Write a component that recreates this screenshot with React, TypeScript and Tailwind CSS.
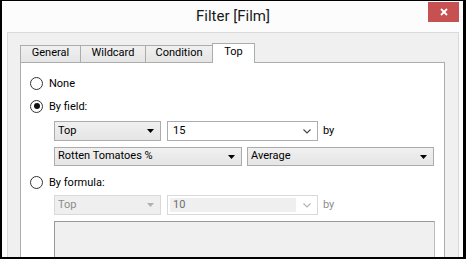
import React from "react";

const Tri = ({ color = "#000" }: { color?: string }) => (
  <svg width="7" height="4" viewBox="0 0 7 4" className="shrink-0">
    <path d="M0 0H7L3.5 4Z" fill={color} />
  </svg>
);

const Chev = ({ color = "#555" }: { color?: string }) => (
  <svg width="8" height="5" viewBox="0 0 8 5" className="shrink-0">
    <path d="M0.5 0.5L4 4L7.5 0.5" stroke={color} fill="none" strokeWidth="1.1" />
  </svg>
);

const Radio = ({ checked, label }: { checked?: boolean; label: string }) => (
  <div className="flex h-[14px] items-center">
    <div className="flex h-[13px] w-[13px] items-center justify-center rounded-full border border-[#333] bg-white">
      {checked && <div className="h-[6px] w-[6px] rounded-full bg-[#111]" />}
    </div>
    <span className="ml-[6px] leading-none">{label}</span>
  </div>
);

const Drop = ({ w, text, disabled }: { w: string; text: string; disabled?: boolean }) => (
  <div
    className={`flex h-full items-center justify-between pl-[3px] pr-[6px] ${w} ${
      disabled
        ? "border border-[#d9d9d9] bg-[#efefef] text-[#8c8c8c]"
        : "border border-[#acacac] bg-gradient-to-b from-[#f0f0f0] to-[#e5e5e5] text-black"
    }`}
  >
    <span>{text}</span>
    <Tri color={disabled ? "#b0b0b0" : "#000"} />
  </div>
);

export default function App() {
  return (
    <div
      className="relative flex h-[259px] w-[466px] flex-col overflow-hidden border-b-2 border-l-2 border-r-[3px] border-t border-black bg-[#fcfcfc] text-[11px] text-black"
      style={{ fontFamily: "Roboto, 'Noto Sans', sans-serif" }}
    >
      <div className="flex h-[31px] shrink-0 items-center justify-center pb-[1px] pl-[1px] text-[15px] text-[#1a1a1a]">
        Filter [Film]
      </div>
      <div className="absolute right-[4px] top-[1px] flex h-[20px] w-[31px] items-center justify-center bg-[#c75050]">
        <svg width="8" height="8" viewBox="0 0 8 8">
          <path d="M1 1L7 7M7 1L1 7" stroke="#fff" strokeWidth="1.8" />
        </svg>
      </div>

      <div className="ml-[5px] flex w-[452px] flex-1 flex-col border border-b-0 border-[#dadada] bg-[#f0f0f0] pl-[12px] pr-[13px] pt-[10px]">
        <div className="flex h-[19px] items-end">
          <div className="flex h-[17px] w-[60px] items-center justify-center border-l border-t border-[#acacac] bg-gradient-to-b from-[#f0f0f0] to-[#e5e5e5] pb-[1px]">
            General
          </div>
          <div className="flex h-[17px] w-[65px] items-center justify-center border-l border-t border-[#acacac] bg-gradient-to-b from-[#f0f0f0] to-[#e5e5e5] pb-[1px]">
            Wildcard
          </div>
          <div className="flex h-[17px] w-[67px] items-center justify-center border-l border-t border-[#acacac] bg-gradient-to-b from-[#f0f0f0] to-[#e5e5e5] pb-[1px]">
            Condition
          </div>
          <div className="relative z-10 -mb-px flex h-[20px] w-[43px] items-center justify-center border-l border-r border-t border-[#acacac] bg-white pb-[3px]">
            Top
          </div>
        </div>

        <div className="flex flex-1 flex-col border border-b-0 border-[#acacac] bg-white pl-[9px] pt-[13px]">
          <Radio label="None" />
          <div className="mt-[9px]">
            <Radio checked label="By field:" />
          </div>

          <div className="ml-[24px] mt-[8px] flex h-[20px] items-center">
            <Drop w="w-[107px]" text="Top" />
            <div className="ml-[6px] flex h-full w-[151px] items-center justify-between border border-[#abadb3] bg-white pl-[5px] pr-[6px]">
              <span>15</span>
              <Chev color="#444" />
            </div>
            <span className="ml-[5px]">by</span>
          </div>

          <div className="ml-[24px] mt-[6px] flex h-[19px] items-center">
            <Drop w="w-[188px]" text="Rotten Tomatoes %" />
            <div className="ml-[5px] h-full">
              <Drop w="w-[187px]" text="Average" />
            </div>
          </div>

          <div className="mt-[9px]">
            <Radio label="By formula:" />
          </div>

          <div className="ml-[24px] mt-[6px] flex h-[20px] items-center">
            <Drop w="w-[107px]" text="Top" disabled />
            <div className="ml-[6px] flex h-full w-[151px] items-center border border-[#d9d9d9] bg-white p-[2px] pr-[6px]">
              <div className="flex h-full flex-1 items-center bg-[#efefef] pl-[3px] text-[#6d6d6d]">10</div>
              <div className="ml-[7px]">
                <Chev color="#b0b0b0" />
              </div>
            </div>
            <span className="ml-[5px] text-[#8c8c8c]">by</span>
          </div>

          <div className="ml-[24px] mt-[6px] w-[381px] flex-1 border border-b-0 border-[#9a9a9a] border-r-[#bdbdbd] bg-[#f0f0f0]" />
        </div>
      </div>
    </div>
  );
}
